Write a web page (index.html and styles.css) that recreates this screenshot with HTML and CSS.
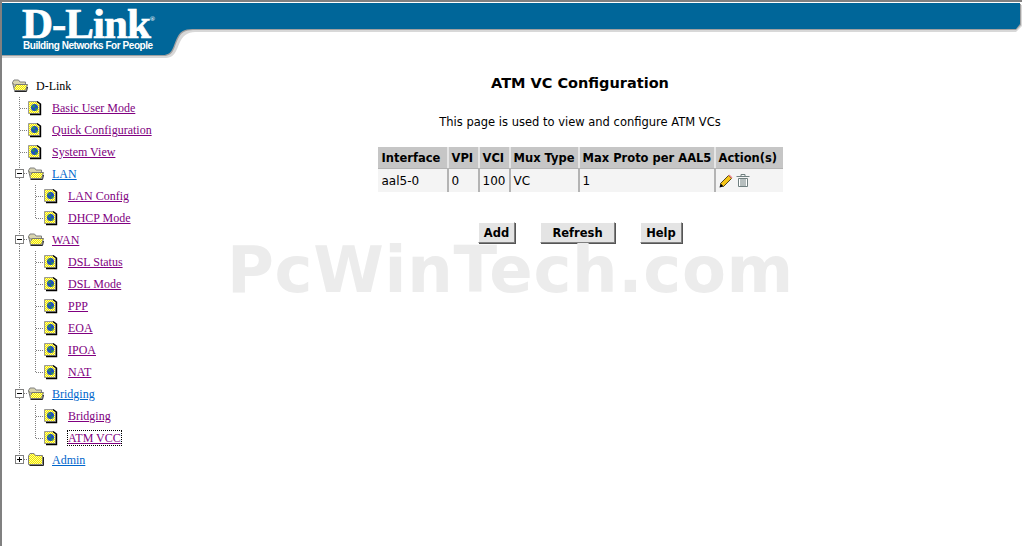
FILE: index.html
```html
<!DOCTYPE html>
<html lang="en">
<head>
    <meta charset="UTF-8">
    <title>ATM VC Configuration</title>
    <link rel="stylesheet" href="styles.css">
</head>
<body>

    <!-- Shared icons for the tree -->
    <svg class="defs" width="2" height="2">
        <defs>
            <pattern id="dither" width="2" height="2" patternUnits="userSpaceOnUse">
                <rect width="2" height="2" fill="#ffff90"/>
                <rect width="1" height="1" fill="#f0e400"/>
                <rect x="1" y="1" width="1" height="1" fill="#f0e400"/>
            </pattern>
            <symbol id="vert" viewBox="0 0 16 22">
                <path d="M7.5 0V22" stroke="#808080" stroke-dasharray="1 1" fill="none"/>
            </symbol>
            <symbol id="tee" viewBox="0 0 16 22">
                <path d="M7.5 0V22M8 11.500H16" stroke="#808080" stroke-dasharray="1 1" fill="none"/>
            </symbol>
            <symbol id="corner" viewBox="0 0 16 22">
                <path d="M7.500 0V11M8 11.500H16" stroke="#808080" stroke-dasharray="1 1" fill="none"/>
            </symbol>
            <symbol id="minus" viewBox="0 0 16 22">
                <path d="M7.500 0V6M7.500 15V22M12 10.500H16" stroke="#808080" stroke-dasharray="1 1" fill="none"/>
                <rect x="3.500" y="6.500" width="8" height="8" fill="#fff" stroke="#808080"/>
                <path d="M5 10.500H10" stroke="#000"/>
            </symbol>
            <symbol id="plus" viewBox="0 0 16 22">
                <path d="M7.500 0V6M12 10.500H16" stroke="#808080" stroke-dasharray="1 1" fill="none"/>
                <rect x="3.500" y="6.500" width="8" height="8" fill="#fff" stroke="#808080"/>
                <path d="M5 10.500H10M7.500 8V13" stroke="#000"/>
            </symbol>
            <symbol id="folder-open" viewBox="0 0 16 22">
                <path d="M0.500 7.500L2 5H6.500L8 7H13.500V10H2Z" fill="#d8d4b0" stroke="#808080"/>
                <path d="M0.500 7.500L2.500 15.500H13.500L15.500 9.500H4L2.500 12.500" fill="url(#dither) #f0e850" stroke="#777"/>
                <path d="M2.500 16.500H14.500L15.500 12" stroke="#222" fill="none"/>
            </symbol>
            <symbol id="folder-closed" viewBox="0 0 16 22">
                <path d="M0.500 7L2 4.500H6L7.500 6.500H14.500V15.500H0.500Z" fill="url(#dither) #f0e850" stroke="#808080"/>
                <path d="M1.500 16.500H15.500V8" stroke="#222" fill="none"/>
            </symbol>
            <symbol id="doc" viewBox="0 0 16 22">
                <path d="M0.500 4.500H9L11.500 7V16.500H0.500Z" fill="url(#dither) #f0e850" stroke="#999"/>
                <path d="M9 4.500L12.500 7V17.500H2" stroke="#000" stroke-width="1.400" fill="none"/>
                <circle cx="6.500" cy="10.500" r="3.500" fill="#1c4fc0"/>
                <path d="M4 8.500L7 8L6.500 10.500L4.500 10.500ZM7 11.500L9.500 11L9 13L7.500 13.500Z" fill="#2f9a3d"/>
            </symbol>
        </defs>
    </svg>

    <!-- Header band -->
    <header class="banner">
        <svg class="banner-shape" viewBox="0 0 1022 60" width="1022" height="60">
            <path d="M2 58H164C176 58 176 50 180 42C184 33 190 32 198 32H1016L1022 26V5H2Z" fill="#d8d8d8"/>
            <path d="M2 56H164C174 56 174 47 178 39C182 30 188 30 196 30H1016L1021 25V4H2Z" fill="#a0a0a0"/>
            <path d="M2 55H163C173 55 173 46 177 38C181 29 187 29 195 29H1016L1020 24V3H2Z" fill="#006699"/>
        </svg>
        <div class="logo">
            <div class="logo-name">D-Link<span class="logo-reg">®</span></div>
            <div class="logo-tag">Building Networks For People</div>
        </div>
    </header>

    <div class="layout">
        <!-- Tree menu -->
        <nav class="tree">
            <div class="row">
                <svg class="cell"><use href="#folder-open"/></svg>
                <a class="node root">D-Link</a>
            </div>
            <div class="row">
                <svg class="cell"><use href="#tee"/></svg>
                <svg class="cell"><use href="#doc"/></svg>
                <a class="node seen" href="#">Basic User Mode</a>
            </div>
            <div class="row">
                <svg class="cell"><use href="#tee"/></svg>
                <svg class="cell"><use href="#doc"/></svg>
                <a class="node seen" href="#">Quick Configuration</a>
            </div>
            <div class="row">
                <svg class="cell"><use href="#tee"/></svg>
                <svg class="cell"><use href="#doc"/></svg>
                <a class="node seen" href="#">System View</a>
            </div>
            <div class="row">
                <svg class="cell"><use href="#minus"/></svg>
                <svg class="cell"><use href="#folder-open"/></svg>
                <a class="node fresh" href="#">LAN</a>
            </div>
            <div class="row">
                <svg class="cell"><use href="#vert"/></svg>
                <svg class="cell"><use href="#tee"/></svg>
                <svg class="cell"><use href="#doc"/></svg>
                <a class="node seen" href="#">LAN Config</a>
            </div>
            <div class="row">
                <svg class="cell"><use href="#vert"/></svg>
                <svg class="cell"><use href="#corner"/></svg>
                <svg class="cell"><use href="#doc"/></svg>
                <a class="node seen" href="#">DHCP Mode</a>
            </div>
            <div class="row">
                <svg class="cell"><use href="#minus"/></svg>
                <svg class="cell"><use href="#folder-open"/></svg>
                <a class="node seen" href="#">WAN</a>
            </div>
            <div class="row">
                <svg class="cell"><use href="#vert"/></svg>
                <svg class="cell"><use href="#tee"/></svg>
                <svg class="cell"><use href="#doc"/></svg>
                <a class="node seen" href="#">DSL Status</a>
            </div>
            <div class="row">
                <svg class="cell"><use href="#vert"/></svg>
                <svg class="cell"><use href="#tee"/></svg>
                <svg class="cell"><use href="#doc"/></svg>
                <a class="node seen" href="#">DSL Mode</a>
            </div>
            <div class="row">
                <svg class="cell"><use href="#vert"/></svg>
                <svg class="cell"><use href="#tee"/></svg>
                <svg class="cell"><use href="#doc"/></svg>
                <a class="node seen" href="#">PPP</a>
            </div>
            <div class="row">
                <svg class="cell"><use href="#vert"/></svg>
                <svg class="cell"><use href="#tee"/></svg>
                <svg class="cell"><use href="#doc"/></svg>
                <a class="node seen" href="#">EOA</a>
            </div>
            <div class="row">
                <svg class="cell"><use href="#vert"/></svg>
                <svg class="cell"><use href="#tee"/></svg>
                <svg class="cell"><use href="#doc"/></svg>
                <a class="node seen" href="#">IPOA</a>
            </div>
            <div class="row">
                <svg class="cell"><use href="#vert"/></svg>
                <svg class="cell"><use href="#corner"/></svg>
                <svg class="cell"><use href="#doc"/></svg>
                <a class="node seen" href="#">NAT</a>
            </div>
            <div class="row">
                <svg class="cell"><use href="#minus"/></svg>
                <svg class="cell"><use href="#folder-open"/></svg>
                <a class="node fresh" href="#">Bridging</a>
            </div>
            <div class="row">
                <svg class="cell"><use href="#vert"/></svg>
                <svg class="cell"><use href="#tee"/></svg>
                <svg class="cell"><use href="#doc"/></svg>
                <a class="node seen" href="#">Bridging</a>
            </div>
            <div class="row">
                <svg class="cell"><use href="#vert"/></svg>
                <svg class="cell"><use href="#corner"/></svg>
                <svg class="cell"><use href="#doc"/></svg>
                <a class="node seen current" href="#">ATM VCC</a>
            </div>
            <div class="row">
                <svg class="cell"><use href="#plus"/></svg>
                <svg class="cell"><use href="#folder-closed"/></svg>
                <a class="node fresh" href="#">Admin</a>
            </div>
        </nav>

        <!-- Main page -->
        <main class="content">
            <h1 class="title">ATM VC Configuration</h1>
            <p class="intro">This page is used to view and configure ATM VCs</p>
            <table class="vc-table">
                <tr>
                    <th class="col-if">Interface</th>
                    <th class="col-vpi">VPI</th>
                    <th class="col-vci">VCI</th>
                    <th class="col-mux">Mux Type</th>
                    <th class="col-max">Max Proto per AAL5</th>
                    <th class="col-act">Action(s)</th>
                </tr>
                <tr>
                    <td>aal5-0</td>
                    <td>0</td>
                    <td>100</td>
                    <td>VC</td>
                    <td>1</td>
                    <td class="actions">
                        <svg width="14" height="14" viewBox="0 0 14 14">
                            <path d="M0.500 13.500L1.500 9.500L4.500 12.500Z" fill="#000"/>
                            <path d="M1.500 9.500L9.500 1.500L12.500 4.500L4.500 12.500Z" fill="#f5c518" stroke="#2a2000" stroke-width="0.800"/>
                            <path d="M9.500 1.500L10.500 0.500L13.500 3.500L12.500 4.500Z" fill="#f08a8a"/>
                        </svg>
                        <svg width="14" height="14" viewBox="0 0 14 14">
                            <path d="M0.500 2.500H13.500M5 2.500V0.500H9V2.500" stroke="#6f7f7f" fill="none"/>
                            <path d="M2.500 4.500H11.500V12.500H2.500Z" fill="#fff" stroke="#6f7f7f"/>
                            <path d="M5 5V12M7 5V12M9 5V12" stroke="#6f7f7f"/>
                        </svg>
                    </td>
                </tr>
            </table>
            <div class="buttons">
                <button class="btn btn-add">Add</button>
                <button class="btn btn-refresh">Refresh</button>
                <button class="btn btn-help">Help</button>
            </div>
        </main>
    </div>

    <!-- Watermark laid over the page -->
    <div class="watermark">PcWinTech.com</div>

</body>
</html>
```

FILE: styles.css
```css
html, body {
    margin: 0;
    padding: 0;
}

body {
    width: 1022px;
    height: 546px;
    overflow: hidden;
    position: relative;
    background-color: #ffffff;
    color: #000000;
    font-family: "DejaVu Sans", Verdana, sans-serif;
    border-top: 2px solid #808080;
    border-left: 2px solid #808080;
    box-sizing: border-box;
}

.defs {
    position: absolute;
}

/* Header band */
.banner {
    position: relative;
    height: 60px;
}

.banner-shape {
    position: absolute;
    top: -2px;
    left: -2px;
}

.logo {
    position: absolute;
    top: 6px;
    left: 20px;
    color: #ffffff;
}

.logo-name {
    font-family: "Liberation Serif", serif;
    font-size: 43px;
    font-weight: bold;
    line-height: 32px;
    letter-spacing: -1px;
    -webkit-text-stroke: 0.7px #ffffff;
}

.logo-reg {
    font-size: 7px;
    line-height: 0;
    vertical-align: 17px;
    -webkit-text-stroke: 0;
}

.logo-tag {
    font-family: "Liberation Sans", sans-serif;
    font-size: 10px;
    font-weight: bold;
    line-height: 12px;
    letter-spacing: -0.45px;
    margin-left: 1px;
    white-space: nowrap;
}

/* Tree menu */
.layout {
    display: flex;
}

.tree {
    width: 156px;
    flex-shrink: 0;
    padding-top: 13px;
    padding-left: 10px;
    box-sizing: border-box;
    white-space: nowrap;
}

.row {
    display: flex;
    align-items: center;
    height: 22px;
}

.cell {
    width: 16px;
    height: 22px;
    flex-shrink: 0;
}

.node {
    margin-left: 8px;
    font-family: "Liberation Serif", serif;
    font-size: 12px;
    line-height: 14px;
}

.root {
    color: #000000;
}

.seen {
    color: #800080;
}

.fresh {
    color: #0066cc;
}

.current {
    outline: 1px dotted #000000;
}

/* Main page */
.content {
    width: 844px;
    display: flex;
    flex-direction: column;
    align-items: center;
}

.title {
    margin: 12px 0 0;
    font-size: 14.5px;
    line-height: 18px;
    font-weight: bold;
}

.intro {
    margin: 23px 0 0;
    font-size: 11.5px;
    line-height: 14px;
}

.vc-table {
    margin-top: 18px;
    width: 405px;
    table-layout: fixed;
    border-collapse: separate;
    border-spacing: 0;
    font-size: 12px;
}

.vc-table th {
    background-color: #c6c6c6;
    border-left: 2px solid #e6e6e6;
    height: 21px;
    padding: 0 1px 0 3px;
    font-size: 11.5px;
    text-align: left;
    white-space: nowrap;
}

.vc-table td {
    background-color: #f4f4f4;
    border-left: 2px solid #b4b4b4;
    border-top: 1px solid #b4b4b4;
    height: 23px;
    padding: 0 1px 0 3px;
}

.vc-table th:first-child,
.vc-table td:first-child {
    border-left: 0;
    padding: 0 2px 0 4px;
}

.col-if {
    width: 63px;
}

.col-vpi {
    width: 25px;
}

.col-vci {
    width: 25px;
}

.col-mux {
    width: 63px;
}

.col-max {
    width: 130px;
}

.actions svg {
    vertical-align: middle;
}

.buttons {
    display: flex;
    margin-top: 30px;
    gap: 25px;
}

.btn {
    height: 21px;
    padding: 0;
    background-color: #e4e4e4;
    border: 1px solid;
    border-color: #ffffff #808080 #808080 #ffffff;
    box-shadow: 1px 1px 0 #555555;
    font-family: "DejaVu Sans", Verdana, sans-serif;
    font-size: 11.5px;
    font-weight: bold;
    color: #000000;
}

.btn-add {
    width: 37px;
}

.btn-refresh {
    width: 75px;
}

.btn-help {
    width: 42px;
}

/* Watermark */
.watermark {
    position: absolute;
    top: 241px;
    left: 225px;
    font-size: 64px;
    font-weight: bold;
    line-height: 54px;
    letter-spacing: 0.7px;
    color: #ececec;
    white-space: nowrap;
    pointer-events: none;
}
```
